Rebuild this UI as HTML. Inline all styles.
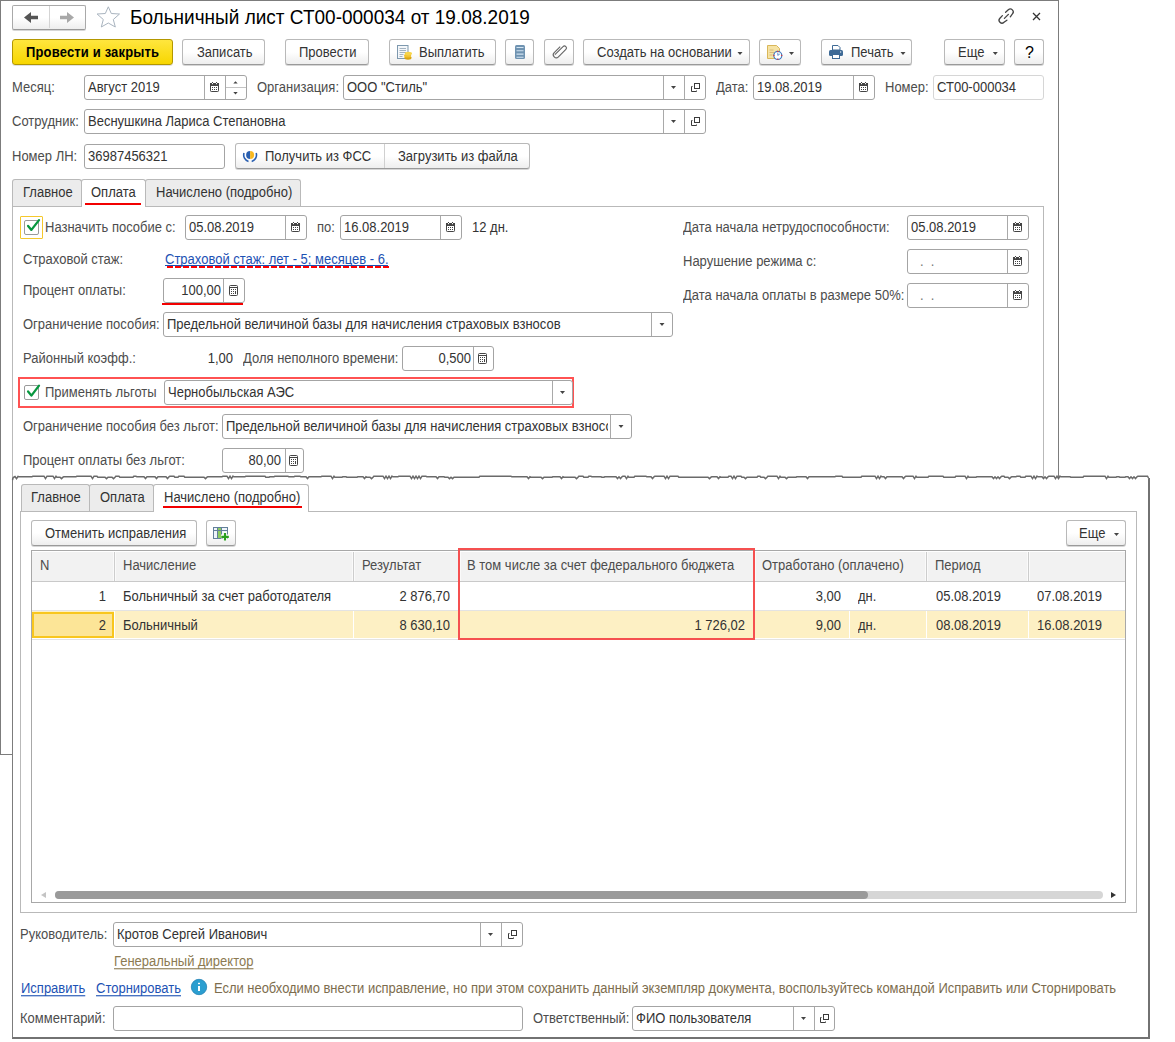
<!DOCTYPE html>
<html><head><meta charset="utf-8">
<style>
*{box-sizing:border-box;margin:0;padding:0}
html,body{width:1175px;height:1042px;background:#fff;overflow:hidden;position:relative;font-family:"Liberation Sans",sans-serif;font-size:13px;color:#333}
.a{position:absolute}
.t{position:absolute;white-space:nowrap;line-height:15px;font-size:13px;transform:scaleY(1.1);transform-origin:0 12px}
.lb{color:#4d4d4d}
.btn{position:absolute;height:26px;border:1px solid #b9b9b9;border-bottom-color:#9a9a9a;border-radius:3px;background:linear-gradient(#fff 0%,#fff 50%,#eeeeee 100%);box-shadow:0 1px 0 rgba(0,0,0,.16)}
.fld{position:absolute;height:25px;border:1px solid #a4a4a4;border-radius:3px;background:#fff}
.dv{position:absolute;top:0;bottom:0;width:1px;background:#a9a9a9}
.dd{position:absolute;width:0;height:0;border-left:3px solid transparent;border-right:3px solid transparent;border-top:3px solid #444}
</style></head><body>

<!-- ============ WINDOW 1 ============ -->
<div class="a" style="left:0;top:0;width:1059px;height:755px;border:1px solid #7c7c7c"></div>

<!-- nav -->
<div class="btn" style="left:12px;top:5px;width:74px;height:25px;border-color:#a9a9a9;border-bottom-color:#999;border-radius:2px"></div>
<div class="a" style="left:49px;top:6px;width:1px;height:22px;background:#d4d4d4"></div>

<!-- star -->
<div class="t" style="left:130px;top:7px;font-size:19px;line-height:21px;color:#000;transform:scaleY(1.08);transform-origin:0 17px">Больничный лист СТ00-000034 от 19.08.2019</div>

<!-- link / close icons -->

<!-- toolbar -->
<div class="a" style="left:12px;top:39px;width:161px;height:26px;border:1px solid #b39700;border-radius:3px;background:linear-gradient(#ffe63e,#f7d600);box-shadow:0 1px 0 rgba(0,0,0,.12)"></div>
<div class="t" style="left:26px;top:45px;font-weight:bold;color:#000;letter-spacing:0.16px">Провести и закрыть</div>
<div class="btn" style="left:182px;top:39px;width:83px"></div>
<div class="t" style="left:197px;top:45px">Записать</div>
<div class="btn" style="left:285px;top:39px;width:84px"></div>
<div class="t" style="left:299px;top:45px">Провести</div>
<div class="btn" style="left:389px;top:39px;width:107px"></div>
<div class="t" style="left:419px;top:45px">Выплатить</div>
<div class="btn" style="left:505px;top:39px;width:29px"></div>
<div class="btn" style="left:544px;top:39px;width:30px"></div>
<div class="btn" style="left:583px;top:39px;width:167px"></div>
<div class="t" style="left:597px;top:45px">Создать на основании</div>
<div class="btn" style="left:759px;top:39px;width:42px"></div>
<div class="btn" style="left:821px;top:39px;width:91px"></div>
<div class="t" style="left:851px;top:45px">Печать</div>
<div class="btn" style="left:944px;top:39px;width:61px"></div>
<div class="t" style="left:958px;top:45px">Еще</div>
<div class="btn" style="left:1014px;top:39px;width:30px"></div>
<div class="t" style="left:1025px;top:44px;color:#000;font-size:16px;line-height:18px;transform:none">?</div>

<!-- row Месяц -->
<div class="t lb" style="left:12px;top:80px">Месяц:</div>
<div class="fld" style="left:84px;top:75px;width:163px"><div class="dv" style="left:119px"></div><div class="dv" style="left:140px"></div></div>
<div class="t" style="left:88px;top:80px">Август 2019</div>
<div class="t lb" style="left:257px;top:80px">Организация:</div>
<div class="fld" style="left:343px;top:75px;width:363px"><div class="dv" style="left:319px"></div><div class="dv" style="left:340px"></div></div>
<div class="t" style="left:347px;top:80px">ООО "Стиль"</div>
<div class="t lb" style="left:716px;top:80px">Дата:</div>
<div class="fld" style="left:753px;top:75px;width:122px"><div class="dv" style="left:99px"></div></div>
<div class="t" style="left:757px;top:80px">19.08.2019</div>
<div class="t lb" style="left:885px;top:80px">Номер:</div>
<div class="fld" style="left:933px;top:75px;width:111px;border-color:#d6d6d6"></div>
<div class="t" style="left:937px;top:80px">СТ00-000034</div>

<!-- row Сотрудник -->
<div class="t lb" style="left:12px;top:114px">Сотрудник:</div>
<div class="fld" style="left:84px;top:109px;width:622px"><div class="dv" style="left:578px"></div><div class="dv" style="left:599px"></div></div>
<div class="t" style="left:88px;top:114px">Веснушкина Лариса Степановна</div>

<!-- row Номер ЛН -->
<div class="t lb" style="left:12px;top:149px">Номер ЛН:</div>
<div class="fld" style="left:84px;top:144px;width:141px"></div>
<div class="t" style="left:88px;top:149px">36987456321</div>
<div class="btn" style="left:235px;top:143px;width:295px;height:26px"><div class="dv" style="left:148px;background:#d0d0d0"></div></div>
<div class="t" style="left:265px;top:149px">Получить из ФСС</div>
<div class="t" style="left:398px;top:149px">Загрузить из файла</div>


<!-- tabs window 1 -->
<div class="a" style="left:12px;top:179px;width:70px;height:28px;border:1px solid #b9b9b9;border-bottom:none;border-radius:3px 3px 0 0;background:#ececec"></div>
<div class="t" style="left:23px;top:185px">Главное</div>
<div class="a" style="left:145px;top:179px;width:156px;height:28px;border:1px solid #b9b9b9;border-bottom:none;border-radius:3px 3px 0 0;background:#ececec"></div>
<div class="t" style="left:156px;top:185px">Начислено (подробно)</div>
<div class="a" style="left:12px;top:206px;width:1032px;height:300px;border:1px solid #b9b9b9;border-bottom:none"></div>
<div class="a" style="left:81px;top:179px;width:65px;height:28px;border:1px solid #b9b9b9;border-bottom:none;border-radius:3px 3px 0 0;background:#fff"></div>
<div class="t" style="left:91px;top:185px">Оплата</div>
<div class="a" style="left:85px;top:203px;width:56px;height:2px;background:#f20000"></div>

<!-- panel rows -->
<div class="a" style="left:20px;top:216px;width:23px;height:23px;border:1px solid #f5c82c;border-radius:1px"></div>
<div class="a" style="left:24px;top:220px;width:15px;height:15px;border:1px solid #9a9a9a;border-radius:2px;background:#fff"></div>
<svg class="a" style="left:24px;top:218px" width="18" height="18" viewBox="0 0 18 18"><path d="M4.1 8 L7.4 11.9 L15 2.1" fill="none" stroke="#08973f" stroke-width="2.3" stroke-linecap="round" stroke-linejoin="round"/></svg>
<div class="t lb" style="left:45px;top:220px">Назначить пособие с:</div>
<div class="fld" style="left:185px;top:215px;width:122px;height:25px"><div class="dv" style="left:99px"></div></div>
<div class="t" style="left:189px;top:220px">05.08.2019</div>
<div class="t lb" style="left:317px;top:220px">по:</div>
<div class="fld" style="left:340px;top:215px;width:122px;height:25px"><div class="dv" style="left:99px"></div></div>
<div class="t" style="left:344px;top:220px">16.08.2019</div>
<div class="t" style="left:472px;top:220px">12 дн.</div>

<div class="t lb" style="left:23px;top:252px">Страховой стаж:</div>
<div class="t" style="left:165px;top:252px;color:#1d52b4">Страховой стаж: лет - 5; месяцев - 6.</div>
<div class="a" style="left:165px;top:265px;width:223px;height:1px;background:#1d52b4"></div>
<div class="a" style="left:167px;top:266px;width:222px;height:2px;background:repeating-linear-gradient(90deg,#f00 0 6px,transparent 6px 8px)"></div>

<div class="t lb" style="left:23px;top:283px">Процент оплаты:</div>
<div class="fld" style="left:163px;top:278px;width:82px;height:25px"><div class="dv" style="left:59px"></div></div>
<div class="t" style="left:166px;top:283px;width:55px;text-align:right">100,00</div>
<div class="a" style="left:162px;top:303px;width:81px;height:2px;background:#f20000"></div>

<div class="t lb" style="left:23px;top:317px">Ограничение пособия:</div>
<div class="fld" style="left:163px;top:312px;width:510px;height:25px"><div class="dv" style="left:487px"></div></div>
<div class="t" style="left:167px;top:317px">Предельной величиной базы для начисления страховых взносов</div>

<div class="t lb" style="left:23px;top:351px">Районный коэфф.:</div>
<div class="t" style="left:180px;top:351px;width:53px;text-align:right">1,00</div>
<div class="t lb" style="left:243px;top:351px">Доля неполного времени:</div>
<div class="fld" style="left:402px;top:346px;width:92px;height:25px"><div class="dv" style="left:70px"></div></div>
<div class="t" style="left:405px;top:351px;width:66px;text-align:right">0,500</div>

<div class="a" style="left:18px;top:377px;width:556px;height:31px;border:2px solid #ff5252"></div>
<div class="a" style="left:24px;top:385px;width:15px;height:15px;border:1px solid #9a9a9a;border-radius:2px;background:#fff"></div>
<svg class="a" style="left:24px;top:383px" width="18" height="18" viewBox="0 0 18 18"><path d="M4.1 8.5 L7.4 12.6 L15 2.6" fill="none" stroke="#08973f" stroke-width="2.3" stroke-linecap="round" stroke-linejoin="round"/></svg>
<div class="t lb" style="left:45px;top:385px">Применять льготы</div>
<div class="fld" style="left:164px;top:380px;width:409px;height:25px"><div class="dv" style="left:387px"></div></div>
<div class="t" style="left:168px;top:385px">Чернобыльская АЭС</div>

<div class="t lb" style="left:23px;top:419px">Ограничение пособия без льгот:</div>
<div class="fld" style="left:222px;top:414px;width:410px;height:25px;overflow:hidden"><div class="dv" style="left:387px"></div><div class="t" style="left:3px;top:4px;width:382px;overflow:hidden">Предельной величиной базы для начисления страховых взносов</div></div>

<div class="t lb" style="left:23px;top:453px">Процент оплаты без льгот:</div>
<div class="fld" style="left:222px;top:448px;width:82px;height:25px"><div class="dv" style="left:62px"></div></div>
<div class="t" style="left:225px;top:453px;width:56px;text-align:right">80,00</div>

<div class="t lb" style="left:683px;top:220px">Дата начала нетрудоспособности:</div>
<div class="fld" style="left:907px;top:215px;width:122px;height:25px"><div class="dv" style="left:99px"></div></div>
<div class="t" style="left:911px;top:220px">05.08.2019</div>
<div class="t lb" style="left:683px;top:254px">Нарушение режима с:</div>
<div class="fld" style="left:907px;top:249px;width:122px;height:25px"><div class="dv" style="left:99px"></div></div>
<div class="t" style="left:920px;top:254px;color:#777">.&nbsp;&nbsp;.</div>
<div class="t lb" style="left:683px;top:288px">Дата начала оплаты в размере 50%:</div>
<div class="fld" style="left:907px;top:283px;width:122px;height:25px"><div class="dv" style="left:99px"></div></div>
<div class="t" style="left:920px;top:288px;color:#777">.&nbsp;&nbsp;.</div>


<!-- ============ WINDOW 2 ============ -->
<div class="a" style="left:12px;top:478px;width:1138px;height:561px;background:#fff;border-left:1px solid #7c7c7c;border-right:2px solid #727272;border-bottom:2px solid #727272"></div>
<svg class="a" style="left:0;top:0" width="1175" height="490" viewBox="0 0 1175 490"><path d="M12.5 480.0 L13.2 477.5 L15.0 476.5 L16.5 478.6 L18.0 476.5 L18.8 476.8 L28.0 476.8 L28.8 476.8 L32.0 476.8 L32.8 476.2 L40.0 476.2 L40.8 476.2 L44.0 476.2 L45.5 478.6 L47.0 476.2 L47.8 476.2 L53.0 476.2 L54.5 478.6 L56.0 476.2 L56.8 477.2 L60.0 477.2 L61.5 478.6 L63.0 477.2 L63.8 476.8 L73.0 476.8 L73.8 476.8 L76.0 476.8 L76.8 476.2 L86.0 476.2 L86.8 476.2 L91.0 476.2 L92.5 478.6 L94.0 476.2 L94.8 476.2 L97.0 476.2 L97.8 477.2 L105.0 477.2 L106.5 478.6 L108.0 477.2 L108.8 477.2 L112.0 477.2 L113.5 478.6 L115.0 477.2 L115.8 476.2 L119.0 476.2 L119.8 477.2 L123.0 477.2 L123.8 477.2 L133.0 477.2 L133.8 476.2 L136.0 476.2 L136.8 476.8 L144.0 476.8 L145.5 478.6 L147.0 476.8 L147.8 476.8 L155.0 476.8 L156.5 478.6 L158.0 476.8 L158.8 476.8 L166.0 476.8 L167.5 478.6 L169.0 476.8 L169.8 476.2 L174.0 476.2 L174.8 477.2 L178.0 477.2 L178.8 476.2 L184.0 476.2 L184.8 477.2 L192.0 477.2 L192.8 477.2 L196.0 477.2 L196.8 477.2 L204.0 477.2 L205.5 478.6 L207.0 477.2 L207.8 476.8 L217.0 476.8 L217.8 476.8 L222.0 476.8 L222.8 476.2 L227.0 476.2 L228.5 478.6 L230.0 476.2 L231.5 478.6 L233.0 476.2 L233.8 476.8 L245.0 476.8 L245.8 476.2 L255.0 476.2 L255.8 476.2 L265.0 476.2 L265.8 477.2 L269.0 477.2 L269.8 476.8 L274.0 476.8 L274.8 476.2 L284.0 476.2 L284.8 476.2 L288.0 476.2 L288.8 476.8 L294.0 476.8 L294.8 476.2 L300.0 476.2 L300.8 476.8 L303.0 476.8 L303.8 476.8 L306.0 476.8 L307.5 478.6 L309.0 476.8 L309.8 476.8 L321.0 476.8 L321.8 476.2 L325.0 476.2 L325.8 476.2 L331.0 476.2 L332.5 478.6 L334.0 476.2 L334.8 477.2 L342.0 477.2 L342.8 476.8 L346.0 476.8 L346.8 477.2 L351.0 477.2 L351.8 477.2 L357.0 477.2 L357.8 476.8 L363.0 476.8 L364.5 478.6 L366.0 476.8 L366.8 477.2 L370.0 477.2 L371.5 478.6 L373.0 477.2 L373.8 476.2 L383.0 476.2 L384.5 478.6 L386.0 476.2 L387.5 478.6 L389.0 476.2 L390.5 478.6 L392.0 476.2 L392.8 476.8 L398.0 476.8 L398.8 476.2 L410.0 476.2 L411.5 478.6 L413.0 476.2 L414.5 478.6 L416.0 476.2 L417.5 478.6 L419.0 476.2 L420.5 478.6 L422.0 476.2 L422.8 476.2 L426.0 476.2 L426.8 476.8 L436.0 476.8 L437.5 478.6 L439.0 476.8 L439.8 476.8 L444.0 476.8 L444.8 477.2 L448.0 477.2 L449.5 478.6 L451.0 477.2 L452.5 478.6 L454.0 477.2 L454.8 477.2 L464.0 477.2 L464.8 477.2 L467.0 477.2 L467.8 477.2 L479.0 477.2 L479.8 476.2 L491.0 476.2 L491.8 476.2 L503.0 476.2 L503.8 476.2 L511.0 476.2 L511.8 476.8 L515.0 476.8 L515.8 476.8 L523.0 476.8 L523.8 476.8 L527.0 476.8 L528.5 478.6 L530.0 476.8 L530.8 477.2 L535.0 477.2 L535.8 477.2 L541.0 477.2 L542.5 478.6 L544.0 477.2 L544.8 477.2 L552.0 477.2 L552.8 476.8 L560.0 476.8 L561.5 478.6 L563.0 476.8 L563.8 477.2 L575.0 477.2 L576.5 478.6 L578.0 477.2 L578.8 476.2 L583.0 476.2 L583.8 477.2 L588.0 477.2 L588.8 476.2 L591.0 476.2 L591.8 476.8 L601.0 476.8 L601.8 477.2 L604.0 477.2 L604.8 476.8 L610.0 476.8 L610.8 476.8 L616.0 476.8 L617.5 478.6 L619.0 476.8 L620.5 478.6 L622.0 476.8 L622.8 476.2 L625.0 476.2 L626.5 478.6 L628.0 476.2 L628.8 477.2 L634.0 477.2 L634.8 476.2 L646.0 476.2 L646.8 476.8 L651.0 476.8 L652.5 478.6 L654.0 476.8 L654.8 476.2 L664.0 476.2 L665.5 478.6 L667.0 476.2 L668.5 478.6 L670.0 476.2 L670.8 476.2 L678.0 476.2 L678.8 477.2 L688.0 477.2 L688.8 477.2 L698.0 477.2 L698.8 477.2 L708.0 477.2 L709.5 478.6 L711.0 477.2 L711.8 476.8 L717.0 476.8 L718.5 478.6 L720.0 476.8 L720.8 477.2 L728.0 477.2 L728.8 476.2 L731.0 476.2 L732.5 478.6 L734.0 476.2 L735.5 478.6 L737.0 476.2 L737.8 476.2 L741.0 476.2 L741.8 477.2 L744.0 477.2 L745.5 478.6 L747.0 477.2 L747.8 477.2 L757.0 477.2 L757.8 476.2 L760.0 476.2 L760.8 477.2 L764.0 477.2 L765.5 478.6 L767.0 477.2 L767.8 476.2 L777.0 476.2 L778.5 478.6 L780.0 476.2 L780.8 477.2 L785.0 477.2 L786.5 478.6 L788.0 477.2 L788.8 477.2 L792.0 477.2 L792.8 477.2 L796.0 477.2 L796.8 476.8 L806.0 476.8 L807.5 478.6 L809.0 476.8 L809.8 476.8 L815.0 476.8 L815.8 476.8 L825.0 476.8 L825.8 476.8 L835.0 476.8 L835.8 476.2 L838.0 476.2 L838.8 476.2 L842.0 476.2 L842.8 477.2 L852.0 477.2 L852.8 477.2 L855.0 477.2 L855.8 477.2 L861.0 477.2 L861.8 476.2 L867.0 476.2 L867.8 476.2 L875.0 476.2 L876.5 478.6 L878.0 476.2 L879.5 478.6 L881.0 476.2 L881.8 476.8 L884.0 476.8 L885.5 478.6 L887.0 476.8 L887.8 476.8 L899.0 476.8 L899.8 476.8 L902.0 476.8 L903.5 478.6 L905.0 476.8 L905.8 476.2 L913.0 476.2 L914.5 478.6 L916.0 476.2 L916.8 477.2 L928.0 477.2 L928.8 476.2 L940.0 476.2 L940.8 476.2 L943.0 476.2 L943.8 477.2 L955.0 477.2 L955.8 476.2 L965.0 476.2 L966.5 478.6 L968.0 476.2 L968.8 477.2 L976.0 477.2 L976.8 476.8 L982.0 476.8 L982.8 476.8 L992.0 476.8 L993.5 478.6 L995.0 476.8 L996.5 478.6 L998.0 476.8 L999.5 478.6 L1001.0 476.8 L1001.8 476.2 L1004.0 476.2 L1004.8 477.2 L1008.0 477.2 L1009.5 478.6 L1011.0 477.2 L1011.8 476.8 L1016.0 476.8 L1016.8 476.2 L1020.0 476.2 L1020.8 477.2 L1025.0 477.2 L1025.8 476.2 L1031.0 476.2 L1032.5 478.6 L1034.0 476.2 L1035.5 478.6 L1037.0 476.2 L1037.8 476.8 L1042.0 476.8 L1043.5 478.6 L1045.0 476.8 L1046.5 478.6 L1048.0 476.8 L1048.8 476.2 L1054.0 476.2 L1055.5 478.6 L1057.0 476.2 L1058.5 478.6 L1060.0 476.2 L1060.8 476.8 L1070.0 476.8 L1070.8 477.2 L1080.0 477.2 L1080.8 477.2 L1083.0 477.2 L1083.8 476.2 L1089.0 476.2 L1089.8 476.2 L1095.0 476.2 L1095.8 476.2 L1105.0 476.2 L1106.5 478.6 L1108.0 476.2 L1108.8 477.2 L1116.0 477.2 L1116.8 476.8 L1119.0 476.8 L1119.8 477.2 L1125.0 477.2 L1125.8 476.8 L1128.0 476.8 L1129.5 478.6 L1131.0 476.8 L1132.5 478.6 L1134.0 476.8 L1135.5 478.6 L1137.0 476.8 L1137.8 476.2 L1147.5 476.2 L1148.5 478.0 L1148 478.5 L13 478.5 Z" fill="#fff"/><path d="M12.5 480.0 L13.2 477.5 L15.0 476.5 L16.5 478.6 L18.0 476.5 L18.8 476.8 L28.0 476.8 L28.8 476.8 L32.0 476.8 L32.8 476.2 L40.0 476.2 L40.8 476.2 L44.0 476.2 L45.5 478.6 L47.0 476.2 L47.8 476.2 L53.0 476.2 L54.5 478.6 L56.0 476.2 L56.8 477.2 L60.0 477.2 L61.5 478.6 L63.0 477.2 L63.8 476.8 L73.0 476.8 L73.8 476.8 L76.0 476.8 L76.8 476.2 L86.0 476.2 L86.8 476.2 L91.0 476.2 L92.5 478.6 L94.0 476.2 L94.8 476.2 L97.0 476.2 L97.8 477.2 L105.0 477.2 L106.5 478.6 L108.0 477.2 L108.8 477.2 L112.0 477.2 L113.5 478.6 L115.0 477.2 L115.8 476.2 L119.0 476.2 L119.8 477.2 L123.0 477.2 L123.8 477.2 L133.0 477.2 L133.8 476.2 L136.0 476.2 L136.8 476.8 L144.0 476.8 L145.5 478.6 L147.0 476.8 L147.8 476.8 L155.0 476.8 L156.5 478.6 L158.0 476.8 L158.8 476.8 L166.0 476.8 L167.5 478.6 L169.0 476.8 L169.8 476.2 L174.0 476.2 L174.8 477.2 L178.0 477.2 L178.8 476.2 L184.0 476.2 L184.8 477.2 L192.0 477.2 L192.8 477.2 L196.0 477.2 L196.8 477.2 L204.0 477.2 L205.5 478.6 L207.0 477.2 L207.8 476.8 L217.0 476.8 L217.8 476.8 L222.0 476.8 L222.8 476.2 L227.0 476.2 L228.5 478.6 L230.0 476.2 L231.5 478.6 L233.0 476.2 L233.8 476.8 L245.0 476.8 L245.8 476.2 L255.0 476.2 L255.8 476.2 L265.0 476.2 L265.8 477.2 L269.0 477.2 L269.8 476.8 L274.0 476.8 L274.8 476.2 L284.0 476.2 L284.8 476.2 L288.0 476.2 L288.8 476.8 L294.0 476.8 L294.8 476.2 L300.0 476.2 L300.8 476.8 L303.0 476.8 L303.8 476.8 L306.0 476.8 L307.5 478.6 L309.0 476.8 L309.8 476.8 L321.0 476.8 L321.8 476.2 L325.0 476.2 L325.8 476.2 L331.0 476.2 L332.5 478.6 L334.0 476.2 L334.8 477.2 L342.0 477.2 L342.8 476.8 L346.0 476.8 L346.8 477.2 L351.0 477.2 L351.8 477.2 L357.0 477.2 L357.8 476.8 L363.0 476.8 L364.5 478.6 L366.0 476.8 L366.8 477.2 L370.0 477.2 L371.5 478.6 L373.0 477.2 L373.8 476.2 L383.0 476.2 L384.5 478.6 L386.0 476.2 L387.5 478.6 L389.0 476.2 L390.5 478.6 L392.0 476.2 L392.8 476.8 L398.0 476.8 L398.8 476.2 L410.0 476.2 L411.5 478.6 L413.0 476.2 L414.5 478.6 L416.0 476.2 L417.5 478.6 L419.0 476.2 L420.5 478.6 L422.0 476.2 L422.8 476.2 L426.0 476.2 L426.8 476.8 L436.0 476.8 L437.5 478.6 L439.0 476.8 L439.8 476.8 L444.0 476.8 L444.8 477.2 L448.0 477.2 L449.5 478.6 L451.0 477.2 L452.5 478.6 L454.0 477.2 L454.8 477.2 L464.0 477.2 L464.8 477.2 L467.0 477.2 L467.8 477.2 L479.0 477.2 L479.8 476.2 L491.0 476.2 L491.8 476.2 L503.0 476.2 L503.8 476.2 L511.0 476.2 L511.8 476.8 L515.0 476.8 L515.8 476.8 L523.0 476.8 L523.8 476.8 L527.0 476.8 L528.5 478.6 L530.0 476.8 L530.8 477.2 L535.0 477.2 L535.8 477.2 L541.0 477.2 L542.5 478.6 L544.0 477.2 L544.8 477.2 L552.0 477.2 L552.8 476.8 L560.0 476.8 L561.5 478.6 L563.0 476.8 L563.8 477.2 L575.0 477.2 L576.5 478.6 L578.0 477.2 L578.8 476.2 L583.0 476.2 L583.8 477.2 L588.0 477.2 L588.8 476.2 L591.0 476.2 L591.8 476.8 L601.0 476.8 L601.8 477.2 L604.0 477.2 L604.8 476.8 L610.0 476.8 L610.8 476.8 L616.0 476.8 L617.5 478.6 L619.0 476.8 L620.5 478.6 L622.0 476.8 L622.8 476.2 L625.0 476.2 L626.5 478.6 L628.0 476.2 L628.8 477.2 L634.0 477.2 L634.8 476.2 L646.0 476.2 L646.8 476.8 L651.0 476.8 L652.5 478.6 L654.0 476.8 L654.8 476.2 L664.0 476.2 L665.5 478.6 L667.0 476.2 L668.5 478.6 L670.0 476.2 L670.8 476.2 L678.0 476.2 L678.8 477.2 L688.0 477.2 L688.8 477.2 L698.0 477.2 L698.8 477.2 L708.0 477.2 L709.5 478.6 L711.0 477.2 L711.8 476.8 L717.0 476.8 L718.5 478.6 L720.0 476.8 L720.8 477.2 L728.0 477.2 L728.8 476.2 L731.0 476.2 L732.5 478.6 L734.0 476.2 L735.5 478.6 L737.0 476.2 L737.8 476.2 L741.0 476.2 L741.8 477.2 L744.0 477.2 L745.5 478.6 L747.0 477.2 L747.8 477.2 L757.0 477.2 L757.8 476.2 L760.0 476.2 L760.8 477.2 L764.0 477.2 L765.5 478.6 L767.0 477.2 L767.8 476.2 L777.0 476.2 L778.5 478.6 L780.0 476.2 L780.8 477.2 L785.0 477.2 L786.5 478.6 L788.0 477.2 L788.8 477.2 L792.0 477.2 L792.8 477.2 L796.0 477.2 L796.8 476.8 L806.0 476.8 L807.5 478.6 L809.0 476.8 L809.8 476.8 L815.0 476.8 L815.8 476.8 L825.0 476.8 L825.8 476.8 L835.0 476.8 L835.8 476.2 L838.0 476.2 L838.8 476.2 L842.0 476.2 L842.8 477.2 L852.0 477.2 L852.8 477.2 L855.0 477.2 L855.8 477.2 L861.0 477.2 L861.8 476.2 L867.0 476.2 L867.8 476.2 L875.0 476.2 L876.5 478.6 L878.0 476.2 L879.5 478.6 L881.0 476.2 L881.8 476.8 L884.0 476.8 L885.5 478.6 L887.0 476.8 L887.8 476.8 L899.0 476.8 L899.8 476.8 L902.0 476.8 L903.5 478.6 L905.0 476.8 L905.8 476.2 L913.0 476.2 L914.5 478.6 L916.0 476.2 L916.8 477.2 L928.0 477.2 L928.8 476.2 L940.0 476.2 L940.8 476.2 L943.0 476.2 L943.8 477.2 L955.0 477.2 L955.8 476.2 L965.0 476.2 L966.5 478.6 L968.0 476.2 L968.8 477.2 L976.0 477.2 L976.8 476.8 L982.0 476.8 L982.8 476.8 L992.0 476.8 L993.5 478.6 L995.0 476.8 L996.5 478.6 L998.0 476.8 L999.5 478.6 L1001.0 476.8 L1001.8 476.2 L1004.0 476.2 L1004.8 477.2 L1008.0 477.2 L1009.5 478.6 L1011.0 477.2 L1011.8 476.8 L1016.0 476.8 L1016.8 476.2 L1020.0 476.2 L1020.8 477.2 L1025.0 477.2 L1025.8 476.2 L1031.0 476.2 L1032.5 478.6 L1034.0 476.2 L1035.5 478.6 L1037.0 476.2 L1037.8 476.8 L1042.0 476.8 L1043.5 478.6 L1045.0 476.8 L1046.5 478.6 L1048.0 476.8 L1048.8 476.2 L1054.0 476.2 L1055.5 478.6 L1057.0 476.2 L1058.5 478.6 L1060.0 476.2 L1060.8 476.8 L1070.0 476.8 L1070.8 477.2 L1080.0 477.2 L1080.8 477.2 L1083.0 477.2 L1083.8 476.2 L1089.0 476.2 L1089.8 476.2 L1095.0 476.2 L1095.8 476.2 L1105.0 476.2 L1106.5 478.6 L1108.0 476.2 L1108.8 477.2 L1116.0 477.2 L1116.8 476.8 L1119.0 476.8 L1119.8 477.2 L1125.0 477.2 L1125.8 476.8 L1128.0 476.8 L1129.5 478.6 L1131.0 476.8 L1132.5 478.6 L1134.0 476.8 L1135.5 478.6 L1137.0 476.8 L1137.8 476.2 L1147.5 476.2 L1148.5 478.0" fill="none" stroke="#6a6a6a" stroke-width="1.5"/></svg>


<!-- tabs window 2 -->
<div class="a" style="left:21px;top:484px;width:69px;height:28px;border:1px solid #b9b9b9;border-bottom:none;border-radius:3px 3px 0 0;background:#ececec"></div>
<div class="t" style="left:31px;top:490px">Главное</div>
<div class="a" style="left:89px;top:484px;width:65px;height:28px;border:1px solid #b9b9b9;border-bottom:none;border-radius:3px 3px 0 0;background:#ececec"></div>
<div class="t" style="left:100px;top:490px">Оплата</div>
<div class="a" style="left:20px;top:511px;width:1117px;height:402px;border:1px solid #b9b9b9"></div>
<div class="a" style="left:153px;top:484px;width:156px;height:28px;border:1px solid #b9b9b9;border-bottom:none;border-radius:3px 3px 0 0;background:#fff"></div>
<div class="t" style="left:164px;top:490px">Начислено (подробно)</div>
<div class="a" style="left:163px;top:506px;width:139px;height:2px;background:#f20000"></div>

<div class="btn" style="left:31px;top:520px;width:166px;height:26px"></div>
<div class="t" style="left:45px;top:526px">Отменить исправления</div>
<div class="btn" style="left:206px;top:520px;width:30px;height:26px"></div>
<div class="btn" style="left:1066px;top:520px;width:60px;height:26px"></div>
<div class="t" style="left:1079px;top:526px">Еще</div>

<!-- table -->
<div class="a" style="left:31px;top:550px;width:1095px;height:353px;border:1px solid #a8a8a8"></div>
<div class="a" style="left:32px;top:552px;width:1093px;height:30px;background:#f2f2f2;border-bottom:1px solid #c9c9c9"></div>
<div class="a" style="left:114px;top:552px;width:1px;height:29px;background:#cdcdcd;box-shadow:-1px 0 0 #fafafa,1px 0 0 #fafafa"></div>
<div class="a" style="left:353px;top:552px;width:1px;height:29px;background:#cdcdcd;box-shadow:-1px 0 0 #fafafa,1px 0 0 #fafafa"></div>
<div class="a" style="left:459px;top:552px;width:1px;height:29px;background:#cdcdcd;box-shadow:-1px 0 0 #fafafa,1px 0 0 #fafafa"></div>
<div class="a" style="left:754px;top:552px;width:1px;height:29px;background:#cdcdcd;box-shadow:-1px 0 0 #fafafa,1px 0 0 #fafafa"></div>
<div class="a" style="left:926px;top:552px;width:1px;height:29px;background:#cdcdcd;box-shadow:-1px 0 0 #fafafa,1px 0 0 #fafafa"></div>
<div class="a" style="left:1028px;top:552px;width:1px;height:29px;background:#cdcdcd;box-shadow:-1px 0 0 #fafafa,1px 0 0 #fafafa"></div>
<div class="t lb" style="left:40px;top:558px">N</div>
<div class="t lb" style="left:123px;top:558px">Начисление</div>
<div class="t lb" style="left:362px;top:558px">Результат</div>
<div class="t lb" style="left:467px;top:558px">В том числе за счет федерального бюджета</div>
<div class="t lb" style="left:762px;top:558px">Отработано (оплачено)</div>
<div class="t lb" style="left:935px;top:558px">Период</div>

<div class="a" style="left:32px;top:610px;width:1093px;height:1px;background:#e3e3e3"></div>
<div class="t" style="left:41px;top:589px;width:65px;text-align:right">1</div>
<div class="t" style="left:123px;top:589px">Больничный за счет работодателя</div>
<div class="t" style="left:360px;top:589px;width:90px;text-align:right">2 876,70</div>
<div class="t" style="left:760px;top:589px;width:81px;text-align:right">3,00</div>
<div class="t" style="left:858px;top:589px">дн.</div>
<div class="t" style="left:936px;top:589px">05.08.2019</div>
<div class="t" style="left:1037px;top:589px">07.08.2019</div>

<div class="a" style="left:32px;top:611px;width:1093px;height:27px;background:#fdf0c4"></div>
<div class="a" style="left:32px;top:639px;width:1093px;height:1px;background:#e3e3e3"></div>
<div class="a" style="left:114px;top:611px;width:1px;height:27px;background:#fff"></div>
<div class="a" style="left:353px;top:611px;width:1px;height:27px;background:#fff"></div>
<div class="a" style="left:459px;top:611px;width:1px;height:27px;background:#fff"></div>
<div class="a" style="left:754px;top:611px;width:1px;height:27px;background:#fff"></div>
<div class="a" style="left:849px;top:611px;width:1px;height:27px;background:#fff"></div>
<div class="a" style="left:926px;top:611px;width:1px;height:27px;background:#fff"></div>
<div class="a" style="left:1028px;top:611px;width:1px;height:27px;background:#fff"></div>
<div class="a" style="left:32px;top:612px;width:82px;height:26px;background:#fce597;border:2px solid #f8c61e"></div>
<div class="t" style="left:41px;top:618px;width:65px;text-align:right">2</div>
<div class="t" style="left:123px;top:618px">Больничный</div>
<div class="t" style="left:360px;top:618px;width:90px;text-align:right">8 630,10</div>
<div class="t" style="left:600px;top:618px;width:145px;text-align:right">1 726,02</div>
<div class="t" style="left:760px;top:618px;width:81px;text-align:right">9,00</div>
<div class="t" style="left:858px;top:618px">дн.</div>
<div class="t" style="left:936px;top:618px">08.08.2019</div>
<div class="t" style="left:1037px;top:618px">16.08.2019</div>

<div class="a" style="left:458px;top:548px;width:297px;height:92px;border:2px solid #f55050"></div>

<!-- scrollbar -->
<div class="a" style="left:55px;top:891px;width:1048px;height:8px;border-radius:4px;background:#d6d6d6"></div>
<div class="a" style="left:55px;top:891px;width:813px;height:8px;border-radius:4px;background:#9a9a9a"></div>
<div class="a" style="left:41px;top:892px;width:0;height:0;border-top:3px solid transparent;border-bottom:3px solid transparent;border-right:5px solid #c4c4c4"></div>
<div class="a" style="left:1111px;top:892px;width:0;height:0;border-top:3px solid transparent;border-bottom:3px solid transparent;border-left:5px solid #333"></div>

<!-- bottom fields -->
<div class="t lb" style="left:20px;top:927px">Руководитель:</div>
<div class="fld" style="left:113px;top:922px;width:410px;height:25px"><div class="dv" style="left:366px"></div><div class="dv" style="left:387px"></div></div>
<div class="t" style="left:117px;top:927px">Кротов Сергей Иванович</div>
<div class="t" style="left:114px;top:954px;color:#8c7a52;text-decoration:underline;text-underline-offset:2px;text-decoration-skip-ink:none">Генеральный директор</div>
<div class="t" style="left:21px;top:981px;color:#1d52b4;text-decoration:underline;text-underline-offset:2px;text-decoration-skip-ink:none">Исправить</div>
<div class="t" style="left:96px;top:981px;color:#1d52b4;text-decoration:underline;text-underline-offset:2px;text-decoration-skip-ink:none">Сторнировать</div>
<div class="t" style="left:214px;top:981px;color:#7d6d4e;letter-spacing:-0.035px">Если необходимо внести исправление, но при этом сохранить данный экземпляр документа, воспользуйтесь командой Исправить или Сторнировать</div>
<div class="t lb" style="left:20px;top:1011px">Комментарий:</div>
<div class="fld" style="left:113px;top:1006px;width:410px;height:25px"></div>
<div class="t lb" style="left:533px;top:1011px">Ответственный:</div>
<div class="fld" style="left:632px;top:1006px;width:203px;height:25px"><div class="dv" style="left:160px"></div><div class="dv" style="left:181px"></div></div>
<div class="t" style="left:636px;top:1011px">ФИО пользователя</div>

<svg class="a" style="left:0;top:0;z-index:10" width="1175" height="1042" viewBox="0 0 1175 1042"><path d="M24 17.5 L31 12 L31 15.8 L38 15.8 L38 19.2 L31 19.2 L31 23 Z" fill="#555"/><path d="M74 17.5 L67 12 L67 15.8 L60 15.8 L60 19.2 L67 19.2 L67 23 Z" fill="#a8a8a8"/><path d="M108.3 6.8 L111.3 13.5 L119.5 14 L113.3 19.5 L115.3 27 L108.3 23 L101.3 27 L103.3 19.5 L97.1 14 L105.3 13.5 Z" fill="none" stroke="#a9b4bf" stroke-width="1"/><g fill="none" stroke="#444" stroke-width="1.3" stroke-linecap="round"><path d="M1005.6 12.3 L1008.3 9.8 A2.9 2.9 0 0 1 1012.4 13.9 L1010.3 16.8"/><path d="M1004.4 18.4 L1008.4 14.4"/><path d="M1002.4 15.6 L999.9 18.2 A2.9 2.9 0 0 0 1004 22.3 L1006.9 20.2"/></g><path d="M1033 13 L1040 20 M1040 13 L1033 20" stroke="#333" stroke-width="1.3"/><g><rect x="397.5" y="45.5" width="10.5" height="13" fill="#f4f7fa" stroke="#7d98ae" stroke-width="1"/><path d="M399.5 48.5h6.5 M399.5 50.5h6.5 M399.5 52.5h6.5 M399.5 54.5h4 M399.5 56.5h3" stroke="#9aaaba" stroke-width="0.9"/><ellipse cx="408" cy="57.8" rx="3.6" ry="1.9" fill="#d9a510"/><ellipse cx="407.6" cy="55.7" rx="3.6" ry="1.9" fill="#f2c230"/><ellipse cx="408.4" cy="53.6" rx="3.6" ry="1.9" fill="#f7d44a"/></g><g><rect x="515" y="45" width="10" height="14" rx="1.5" fill="#6f93b1"/><path d="M516.5 47.5h7 M516.5 50.8h7 M516.5 54.1h7 M516.5 57.2h7" stroke="#d2e4f2" stroke-width="1.1"/></g><path d="M1.5 -1 L13 -1 A2 2 0 0 1 13 3 L2.5 3 A3 3 0 0 1 2.5 -3 L11 -3" fill="none" stroke="#676767" stroke-width="1.15" transform="translate(559.5,51.5) rotate(-45) translate(-7,0)"/><g><path d="M767.5 45.5 L776.5 45.5 L779.5 48.5 L779.5 58.5 L767.5 58.5 Z" fill="#f6e3a4" stroke="#d9b75a" stroke-width="1"/><path d="M769.5 50h4 M769.5 52.5h5 M769.5 55h3" stroke="#d2b070" stroke-width="0.8"/><circle cx="777.8" cy="55.4" r="4" fill="#fff" stroke="#3a78c0" stroke-width="1.2"/><path d="M777.8 55.4 L777.8 52.8 M777.8 55.4 L779.8 54" stroke="#3a78c0" stroke-width="0.8"/><circle cx="777.8" cy="51.5" r="0.7" fill="#e33"/><circle cx="781.7" cy="55.4" r="0.7" fill="#e33"/><circle cx="777.8" cy="59.3" r="0.7" fill="#e33"/><circle cx="773.9" cy="55.4" r="0.7" fill="#e33"/></g><g><path d="M832.5 45.5 L838 45.5 L840 47.5 L840 50 L832.5 50 Z" fill="#fff" stroke="#3e6a96" stroke-width="1"/><rect x="829" y="50" width="14" height="6" rx="1.5" fill="#3e6a96"/><rect x="832.5" y="54.5" width="7" height="4" fill="#fff" stroke="#3e6a96" stroke-width="1"/><rect x="840" y="51.5" width="1.2" height="1" fill="#fff"/></g><path d="M737.5 52 L742.5 52 L740 55 Z" fill="#444"/><path d="M789.0 52 L794.0 52 L791.5 55 Z" fill="#444"/><path d="M900.5 52 L905.5 52 L903 55 Z" fill="#444"/><path d="M992.8 52 L997.8 52 L995.3 55 Z" fill="#444"/><path d="M1114 533 L1119 533 L1116.5 536 Z" fill="#444"/><g transform="translate(210,82)" fill="#444"><rect x="0.5" y="1.5" width="8" height="8" rx="0.8" fill="none" stroke="#444" stroke-width="1"/><rect x="0" y="1" width="9" height="3"/><rect x="2" y="0" width="1" height="1"/><rect x="6" y="0" width="1" height="1"/><rect x="2" y="1" width="1" height="1.2" fill="#fff"/><rect x="6" y="1" width="1" height="1.2" fill="#fff"/><rect x="2" y="5" width="1" height="1"/><rect x="4" y="5" width="1" height="1"/><rect x="6" y="5" width="1" height="1"/><rect x="2" y="7" width="1" height="1"/><rect x="4" y="7" width="1" height="1"/><rect x="6" y="7" width="1" height="1"/></g><path d="M233.3 83.6 L237.7 83.6 L235.5 81.2 Z M233.3 92 L237.7 92 L235.5 94.4 Z" fill="#444"/><rect x="226" y="87" width="20" height="1" fill="#c4c4c4"/><path d="M671.0 86 L676.0 86 L673.5 89 Z" fill="#444"/><g transform="translate(691,83)" fill="none" stroke="#3a3a3a" stroke-width="1"><rect x="3.5" y="0.5" width="5" height="5"/><path d="M1.5 3.5 L0.5 3.5 L0.5 8.5 L5.5 8.5 L5.5 7.5"/></g><path d="M671.0 120 L676.0 120 L673.5 123 Z" fill="#444"/><g transform="translate(691,117)" fill="none" stroke="#3a3a3a" stroke-width="1"><rect x="3.5" y="0.5" width="5" height="5"/><path d="M1.5 3.5 L0.5 3.5 L0.5 8.5 L5.5 8.5 L5.5 7.5"/></g><g transform="translate(859,82)" fill="#444"><rect x="0.5" y="1.5" width="8" height="8" rx="0.8" fill="none" stroke="#444" stroke-width="1"/><rect x="0" y="1" width="9" height="3"/><rect x="2" y="0" width="1" height="1"/><rect x="6" y="0" width="1" height="1"/><rect x="2" y="1" width="1" height="1.2" fill="#fff"/><rect x="6" y="1" width="1" height="1.2" fill="#fff"/><rect x="2" y="5" width="1" height="1"/><rect x="4" y="5" width="1" height="1"/><rect x="6" y="5" width="1" height="1"/><rect x="2" y="7" width="1" height="1"/><rect x="4" y="7" width="1" height="1"/><rect x="6" y="7" width="1" height="1"/></g><g><path d="M250.1 151 A4 4 0 0 0 250.1 159 Z" fill="#2a5fb0"/><path d="M250.1 151 A4 4 0 0 1 250.1 159 Z" fill="#f8b820"/><path d="M244 153 A6.8 6.8 0 0 0 248.5 161.5 M256.2 153 A6.8 6.8 0 0 1 251.7 161.5" fill="none" stroke="#2a5fb0" stroke-width="1.6"/></g><g transform="translate(291,222)" fill="#444"><rect x="0.5" y="1.5" width="8" height="8" rx="0.8" fill="none" stroke="#444" stroke-width="1"/><rect x="0" y="1" width="9" height="3"/><rect x="2" y="0" width="1" height="1"/><rect x="6" y="0" width="1" height="1"/><rect x="2" y="1" width="1" height="1.2" fill="#fff"/><rect x="6" y="1" width="1" height="1.2" fill="#fff"/><rect x="2" y="5" width="1" height="1"/><rect x="4" y="5" width="1" height="1"/><rect x="6" y="5" width="1" height="1"/><rect x="2" y="7" width="1" height="1"/><rect x="4" y="7" width="1" height="1"/><rect x="6" y="7" width="1" height="1"/></g><g transform="translate(446,222)" fill="#444"><rect x="0.5" y="1.5" width="8" height="8" rx="0.8" fill="none" stroke="#444" stroke-width="1"/><rect x="0" y="1" width="9" height="3"/><rect x="2" y="0" width="1" height="1"/><rect x="6" y="0" width="1" height="1"/><rect x="2" y="1" width="1" height="1.2" fill="#fff"/><rect x="6" y="1" width="1" height="1.2" fill="#fff"/><rect x="2" y="5" width="1" height="1"/><rect x="4" y="5" width="1" height="1"/><rect x="6" y="5" width="1" height="1"/><rect x="2" y="7" width="1" height="1"/><rect x="4" y="7" width="1" height="1"/><rect x="6" y="7" width="1" height="1"/></g><g transform="translate(1013,222)" fill="#444"><rect x="0.5" y="1.5" width="8" height="8" rx="0.8" fill="none" stroke="#444" stroke-width="1"/><rect x="0" y="1" width="9" height="3"/><rect x="2" y="0" width="1" height="1"/><rect x="6" y="0" width="1" height="1"/><rect x="2" y="1" width="1" height="1.2" fill="#fff"/><rect x="6" y="1" width="1" height="1.2" fill="#fff"/><rect x="2" y="5" width="1" height="1"/><rect x="4" y="5" width="1" height="1"/><rect x="6" y="5" width="1" height="1"/><rect x="2" y="7" width="1" height="1"/><rect x="4" y="7" width="1" height="1"/><rect x="6" y="7" width="1" height="1"/></g><g transform="translate(1013,256)" fill="#444"><rect x="0.5" y="1.5" width="8" height="8" rx="0.8" fill="none" stroke="#444" stroke-width="1"/><rect x="0" y="1" width="9" height="3"/><rect x="2" y="0" width="1" height="1"/><rect x="6" y="0" width="1" height="1"/><rect x="2" y="1" width="1" height="1.2" fill="#fff"/><rect x="6" y="1" width="1" height="1.2" fill="#fff"/><rect x="2" y="5" width="1" height="1"/><rect x="4" y="5" width="1" height="1"/><rect x="6" y="5" width="1" height="1"/><rect x="2" y="7" width="1" height="1"/><rect x="4" y="7" width="1" height="1"/><rect x="6" y="7" width="1" height="1"/></g><g transform="translate(1013,290)" fill="#444"><rect x="0.5" y="1.5" width="8" height="8" rx="0.8" fill="none" stroke="#444" stroke-width="1"/><rect x="0" y="1" width="9" height="3"/><rect x="2" y="0" width="1" height="1"/><rect x="6" y="0" width="1" height="1"/><rect x="2" y="1" width="1" height="1.2" fill="#fff"/><rect x="6" y="1" width="1" height="1.2" fill="#fff"/><rect x="2" y="5" width="1" height="1"/><rect x="4" y="5" width="1" height="1"/><rect x="6" y="5" width="1" height="1"/><rect x="2" y="7" width="1" height="1"/><rect x="4" y="7" width="1" height="1"/><rect x="6" y="7" width="1" height="1"/></g><g transform="translate(229,285)" fill="#444"><rect x="0.5" y="0.5" width="8" height="10" rx="1" fill="none" stroke="#444" stroke-width="1"/><rect x="1" y="2" width="7" height="1"/><rect x="2" y="4" width="1" height="1"/><rect x="4" y="4" width="1" height="1"/><rect x="6" y="4" width="1" height="1"/><rect x="2" y="6" width="1" height="1"/><rect x="4" y="6" width="1" height="1"/><rect x="6" y="6" width="1" height="3"/><rect x="2" y="8" width="1" height="1"/><rect x="4" y="8" width="1" height="1"/></g><g transform="translate(478,353)" fill="#444"><rect x="0.5" y="0.5" width="8" height="10" rx="1" fill="none" stroke="#444" stroke-width="1"/><rect x="1" y="2" width="7" height="1"/><rect x="2" y="4" width="1" height="1"/><rect x="4" y="4" width="1" height="1"/><rect x="6" y="4" width="1" height="1"/><rect x="2" y="6" width="1" height="1"/><rect x="4" y="6" width="1" height="1"/><rect x="6" y="6" width="1" height="3"/><rect x="2" y="8" width="1" height="1"/><rect x="4" y="8" width="1" height="1"/></g><g transform="translate(289,455)" fill="#444"><rect x="0.5" y="0.5" width="8" height="10" rx="1" fill="none" stroke="#444" stroke-width="1"/><rect x="1" y="2" width="7" height="1"/><rect x="2" y="4" width="1" height="1"/><rect x="4" y="4" width="1" height="1"/><rect x="6" y="4" width="1" height="1"/><rect x="2" y="6" width="1" height="1"/><rect x="4" y="6" width="1" height="1"/><rect x="6" y="6" width="1" height="3"/><rect x="2" y="8" width="1" height="1"/><rect x="4" y="8" width="1" height="1"/></g><path d="M659.5 323 L664.5 323 L662 326 Z" fill="#444"/><path d="M560.0 391 L565.0 391 L562.5 394 Z" fill="#444"/><path d="M618.5 425 L623.5 425 L621 428 Z" fill="#444"/><g><rect x="213.5" y="527.5" width="14" height="11" fill="#eef4fa" stroke="#62809a" stroke-width="1"/><rect x="218" y="528" width="3.5" height="10" fill="#8ccc60"/><path d="M213.5 530.5h14 M217.5 527.5v11 M221.5 527.5v11" stroke="#62809a" stroke-width="1"/><path d="M225 532.5 v8 M221 536.5 h8" stroke="#fff" stroke-width="4"/><path d="M225 533 v7.5 M221.3 536.8 h7.5" stroke="#2aa020" stroke-width="2.2"/></g><path d="M488 933 L493 933 L490.5 936 Z" fill="#444"/><g transform="translate(508,930)" fill="none" stroke="#3a3a3a" stroke-width="1"><rect x="3.5" y="0.5" width="5" height="5"/><path d="M1.5 3.5 L0.5 3.5 L0.5 8.5 L5.5 8.5 L5.5 7.5"/></g><path d="M801.0 1017 L806.0 1017 L803.5 1020 Z" fill="#444"/><g transform="translate(820,1014)" fill="none" stroke="#3a3a3a" stroke-width="1"><rect x="3.5" y="0.5" width="5" height="5"/><path d="M1.5 3.5 L0.5 3.5 L0.5 8.5 L5.5 8.5 L5.5 7.5"/></g><circle cx="199" cy="987" r="7.7" fill="#2b9ed0" stroke="#2583b5" stroke-width="0.8"/><rect x="198" y="982.8" width="2" height="1.4" fill="#fff"/><rect x="198" y="986" width="2" height="5" fill="#fff"/></svg>
</body></html>
